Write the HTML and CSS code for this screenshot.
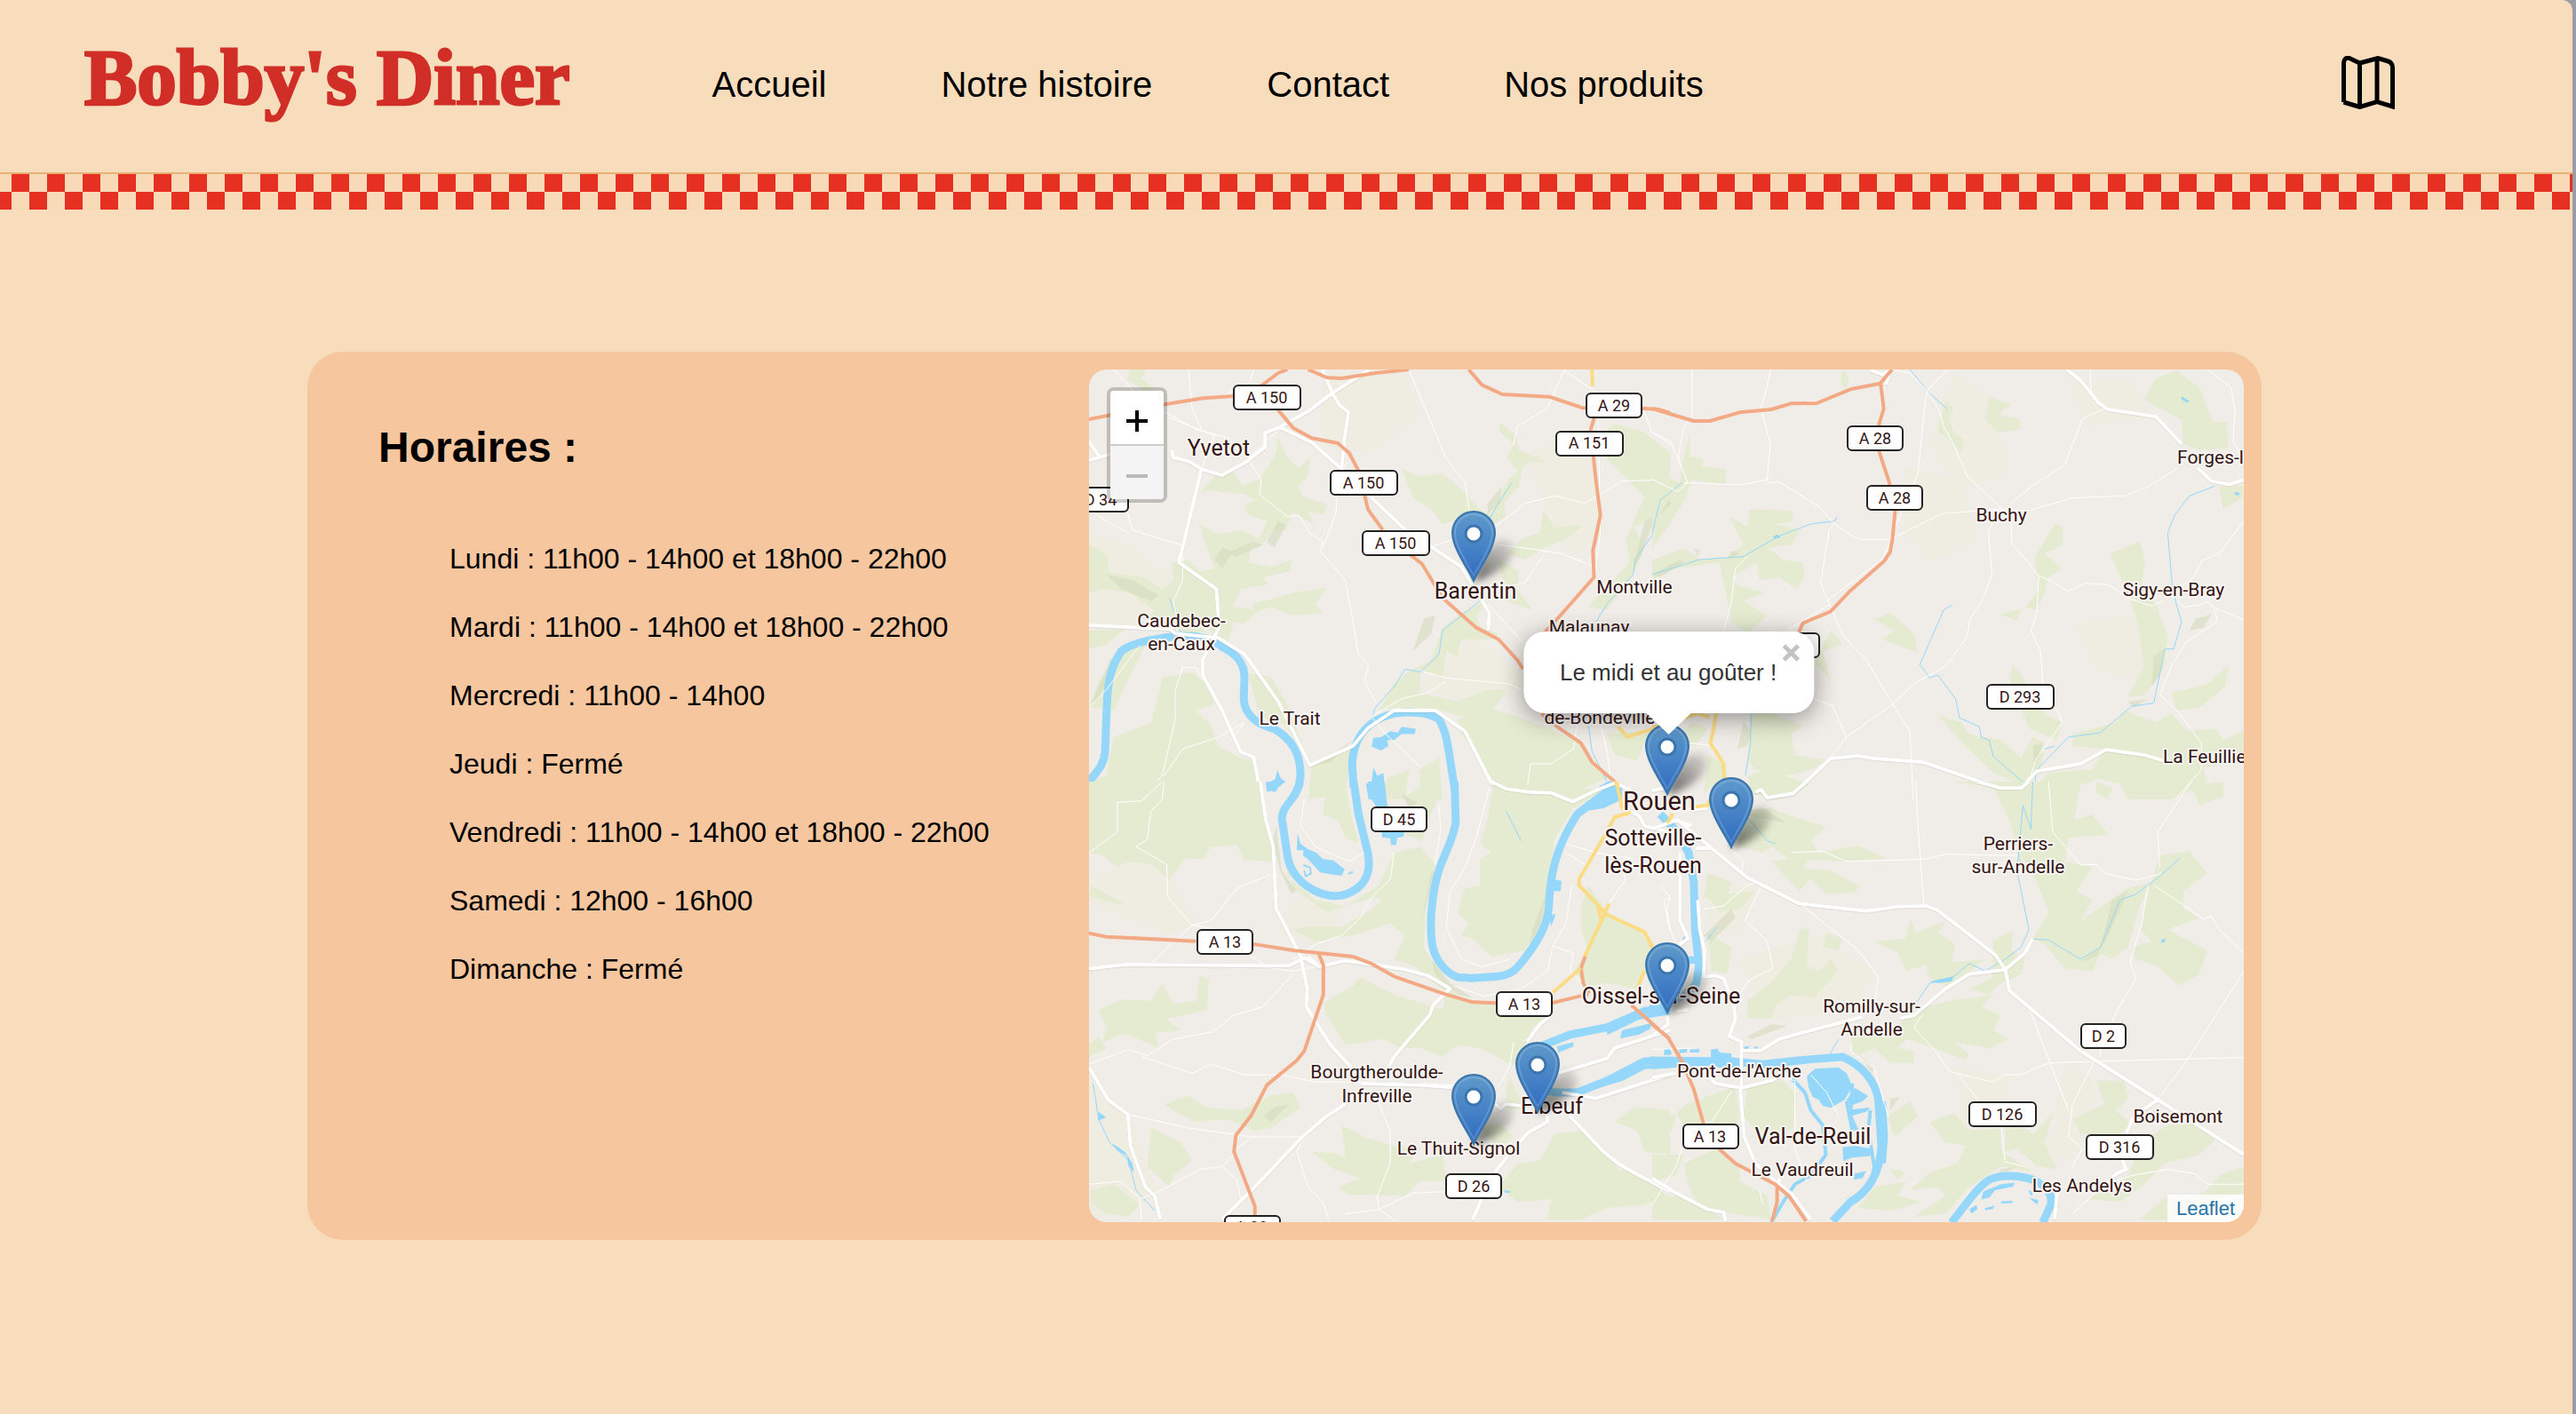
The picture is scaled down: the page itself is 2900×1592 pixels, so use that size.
FILE: index.html
```html
<!DOCTYPE html>
<html lang="fr">
<head>
<meta charset="utf-8">
<meta name="viewport" content="width=device-width, initial-scale=1">
<title>Bobby's Diner</title>
<link rel="stylesheet" href="styles.css">
</head>
<body>
<header class="header">
  <a class="logo" href="#">Bobby's Diner</a>
  <nav class="nav">
    <a href="#">Accueil</a>
    <a href="#">Notre histoire</a>
    <a href="#">Contact</a>
    <a href="#">Nos produits</a>
  </nav>
  <a class="map-link" href="#" aria-label="Carte">
    <svg viewBox="0 0 60 60" fill="none" stroke="#000" stroke-width="5">
      <path d="M2.500 52V8Q3 1 9 2.500L20.500 8 41 2.500 51 5.500Q57.500 7 57.500 13V57L40 51.500 20.500 57.500 2.500 52"/>
      <path d="M20.500 8V57M40 3V52"/>
    </svg>
  </a>
</header>
<div class="checker"></div>
<main class="main">
  <section class="card">
    <div class="hours">
      <h2>Horaires :</h2>
      <ul>
        <li>Lundi : 11h00 - 14h00 et 18h00 - 22h00</li>
        <li>Mardi : 11h00 - 14h00 et 18h00 - 22h00</li>
        <li>Mercredi : 11h00 - 14h00</li>
        <li>Jeudi : Fermé</li>
        <li>Vendredi : 11h00 - 14h00 et 18h00 - 22h00</li>
        <li>Samedi : 12h00 - 16h00</li>
        <li>Dimanche : Fermé</li>
      </ul>
    </div>
    <div class="map">
      <svg class="tiles" viewBox="0 0 1300 960" preserveAspectRatio="xMidYMid slice">
        <defs>
          <linearGradient id="pinFill" x1="0" y1="0" x2="0" y2="1"><stop offset="0" stop-color="#5f9acb"/><stop offset="1" stop-color="#2e6bc0"/></linearGradient>
          <filter id="soft" x="-50%" y="-50%" width="200%" height="200%"><feGaussianBlur stdDeviation="4"/></filter>
          <linearGradient id="shade" x1="0" y1="1" x2="1" y2="0"><stop offset="0" stop-opacity=".6"/><stop offset="1" stop-opacity=".06"/></linearGradient>
          <g id="pin">
            <path d="M0 0C4-22 18-46 36-48C52-46 46-22 24-10C14-4 6-1 0 0Z" fill="url(#shade)" filter="url(#soft)"/>
            <path d="M0-1C-6-14-24-38-24-55A24 24 0 0 1 24-55C24-38 6-14 0-1Z" fill="url(#pinFill)" stroke="#3a76ab" stroke-width="2"/>
            <path d="M0-7C-6-19-21-40-21-55A21 21 0 0 1 21-55C21-40 6-19 0-7Z" fill="none" stroke="#fff" stroke-opacity=".16" stroke-width="2"/>
            <circle cy="-54" r="9" fill="#fff" stroke="#3a75ae" stroke-width="3"/>
          </g>
        </defs>
        <rect width="1300" height="960" fill="#f0ede8"/>

        <!-- north-west sheet -->
        <g transform="translate(-6 -16) scale(.4209 .3333)">
          <g class="heath">
            <path d="M14 600L120 640 200 720 360 740 420 900 380 960 200 930 14 900ZM640 60L860 50 900 200 760 330 640 300ZM1180 330L1350 260 1400 600 1300 680ZM1050 950L1180 1100 1080 1200 900 1120Z"/>
          </g>
          <g class="wood">
            <path d="M125 48L168 48 152 80 192 112 164 120 116 82Z"/>
            <path d="M518 275L548 350 575 382 605 345 600 410 572 440 585 475 652 505 645 535 600 528 618 572 560 530 540 592 510 590 470 650 450 640 440 700 500 715 560 690 550 730 480 750 495 775 420 790 400 850 470 860 430 905 400 900 380 1000 330 920 290 960 220 930 170 890 190 860 120 800 60 790 14 800 14 690 60 680 70 735 160 750 210 790 240 760 235 700 280 690 310 730 350 720 320 620 310 570 360 605 420 590 470 620 490 560 440 540 430 505 460 490 430 470 330 455 310 465 350 410 400 395 425 440 470 420 515 330Z"/>
            <path d="M14 440L48 445 55 490 40 540 14 520ZM14 640L50 660 70 690 14 720ZM14 930L110 925 60 980 14 990Z"/>
            <path d="M570 800L650 785 620 840 640 870 560 880 500 850 460 870 450 840Z"/>
            <path d="M850 380L895 410 960 400 1000 440 1060 520 1090 540 1130 430 1175 370 1165 440 1125 500 1130 545 1070 590 1050 570 990 560 960 570 930 520 880 480ZM1115 230L1155 270 1165 320 1240 362 1190 360 1165 395 1130 345 1150 300 1110 255Z"/>
            <path d="M1230 525L1260 580 1335 575 1290 620 1230 650 1180 690 1130 670 1170 620 1220 600ZM1110 690L1165 730 1160 790 1200 860 1130 830Z"/>
            <path d="M1380 270L1420 230 1500 260 1568 330 1568 470 1530 500 1540 540 1470 580 1500 640 1470 740 1400 860 1350 850 1460 700 1450 620 1500 480 1440 400 1400 350Z"/>
            <path d="M960 920L1010 870 1080 830 1050 880 1060 920 1110 940 1090 960 1010 960 1000 1020 970 1000 960 1090 900 1060 900 1140 1000 1170 1080 1130 1130 1130 1100 1190 1040 1230 960 1200 900 1190 840 1190 790 1200 830 1110 880 1060 930 1030Z"/>
            <path d="M100 980L170 970 140 1040 80 1200 14 1190 40 1100 90 1030ZM210 1090L290 1070 330 1110 350 1180 300 1200 340 1250 360 1320 420 1360 455 1370 480 1500 14 1500 14 1440 60 1420 80 1290 180 1240Z"/>
            <path d="M440 1075L500 1085 540 1170 580 1300 610 1390 720 1320 700 1480 600 1500 610 1380 540 1250 470 1220Z"/>
            <path d="M1000 1230L1080 1190 1160 1220 1240 1260 1320 1300 1400 1430 1300 1480 1200 1470 1100 1450 1060 1360 1010 1280ZM900 1400L950 1360 960 1500 900 1500ZM810 1430L870 1400 860 1500 800 1500Z"/>
            <path d="M1400 1280L1568 1260 1568 1300 1500 1310 1480 1370 1420 1350Z"/>
          </g>
          <g class="relief">
            <path d="M520 560L540 575 510 650 490 630ZM450 630L480 640 410 680 380 670ZM60 740L130 760 200 810 180 830 100 790ZM350 690L370 650 400 660 370 720ZM20 1180L70 1030 110 980 80 1050 40 1160ZM910 890L940 880 930 940 880 1000ZM1500 560L1530 540 1490 680 1470 720ZM590 1390L660 1350 720 1300 660 1375ZM1080 500L1120 440 1110 500 1080 540Z"/>
          </g>
          <g class="stream"><path d="M1145 430L1090 540 1060 700M1060 830L960 930 950 1010 900 1070 860 1060 830 1120 780 1190 770 1230M1568 480L1530 540 1525 600 1475 690 1470 740 1400 840 1370 900M1350 1250L1360 1340 1400 1440M230 820L260 940"/></g>
          <g class="water-fill">
            <path d="M850 1255L888 1262 885 1280 850 1280 830 1300 812 1300 815 1320 795 1335 770 1322 775 1292 795 1290 820 1270 840 1275ZM775 1392L785 1420 802 1412 808 1500 762 1500 755 1448 770 1440ZM518 1402L528 1430 540 1442 522 1448 515 1475 490 1470 488 1448 512 1432Z"/>
            <path d="M1410 1435L1440 1460 1400 1500 1360 1500 1380 1455Z"/>
          </g>
          <g class="river">
            <path d="M14 1440C40 1400 55 1380 57 1340L62 1180C65 1090 75 1050 100 1000C130 970 180 960 250 948C300 945 340 955 370 985C410 1010 430 1040 430 1090L428 1160C430 1220 470 1250 510 1262C560 1300 580 1350 580 1420L575 1460"/>
            <path d="M722 1460L718 1380C722 1290 760 1230 830 1210C880 1200 930 1210 950 1230C975 1280 975 1340 992 1460"/>
          </g>
          <g class="lane">
            <path d="M80 48L140 130 200 180 300 250 390 280M280 48L290 180 315 250M455 48L445 90 370 140M870 48L910 170 970 350 1020 430 1040 600M1285 50L1240 180 1160 240 1150 300M1285 50L1375 130M1375 130L1382 600 1365 760M1480 130L1520 260 1568 300M530 240L440 350 475 420 470 470 545 545 575 540 605 600 640 630 632 660 700 760 720 900 735 1010 762 1050 750 1100 780 1170M705 360L680 420 675 530 640 650M110 500L130 590 180 610 260 640M1100 580L1180 500 1260 475 1340 500 1440 425 1568 420M920 650L1020 610M1110 640L1200 655 1280 670 1365 715M1230 675L1180 770 1130 780M1080 840L1175 970M910 1070L970 1090 1140 1110 1170 1130M970 1100L920 1140 850 1160 770 1220 800 1270 900 1390M14 1190L60 1130 150 980M320 1100L300 1055 265 1055 245 1130 245 1230 210 1420 150 1500M430 1240L360 1290 265 1330 215 1420M430 1240L395 1300M1320 1250L1310 1330 1250 1380 1195 1380 1185 1470M1380 1230L1400 1340 1410 1440M225 210L350 270 315 385M14 520L60 560 120 600M265 640L265 760 240 830 250 930"/>
          </g>
          <g class="road">
            <path d="M14 290L40 340 40 350M14 355L70 335M14 912L230 925 245 940 360 955 430 1010 520 1170 605 1385 720 1320 760 1260 830 1200 940 1200 1020 1270 1090 1445 1130 1465 1250 1475 1310 1500M235 320L240 345 285 360 315 385 370 405 435 360 485 310 485 262 525 243 600 190 665 128 765 48M638 48L665 128 685 170 708 192 697 290 690 385M525 243L610 295 690 385 860 590 1010 715 1075 850 1085 870 1082 930M315 385L255 700 355 790 362 920 318 1030 318 1080 370 1200 420 1340 455 1358 475 1500M1430 1450L1480 1480"/>
          </g>
          <g class="motorway">
            <path d="M14 216L220 165 320 145 400 138 475 103 520 60 545 48M600 48L650 75 690 78 780 60 870 48M520 185L560 245 610 280 680 297 710 330 735 390M751 470L760 520 800 590M870 670L905 705 960 820 1050 920 1110 960 1160 1030 1175 1060M1225 1210L1270 1258 1330 1310 1360 1375 1420 1440M1030 48L1065 100 1120 132 1245 140 1335 178 1500 180 1535 182 1568 195M1367 205L1356 250 1368 400 1382 540 1362 660 1365 750 1260 900 1230 940"/>
          </g>
          <g class="trunk"><path d="M1360 48L1361 105M1430 1255L1455 1290 1500 1270 1568 1250M1420 1440L1435 1500"/></g>
        </g>

        <!-- south-west sheet -->
        <g transform="translate(-6 464) scale(.4209 .3333)">
          <g class="heath">
            <path d="M30 330L120 270 220 300 300 480 220 520 14 400ZM14 1000L60 1080 120 1130 200 1400 14 1480ZM560 400L700 420 640 560 520 500Z"/>
          </g>
          <g class="wood">
            <path d="M14 0L470 0 505 220 510 270 430 265 410 215 340 220 320 262 270 260 230 330 180 280 120 270 90 290 50 250 14 240ZM20 350L60 380 110 410 90 415 14 385Z"/>
            <path d="M650 10L700 20 720 130 735 210 700 190 680 130 640 110ZM920 0L945 60 920 140 905 200 860 180 880 90 860 50Z"/>
            <path d="M520 130L545 320 620 400 700 420 790 350 830 240 900 220 940 280 915 400 910 560 970 680 1010 740 1090 745 1190 790 1250 790 1200 830 1180 900 1150 960 1060 900 1000 890 960 930 900 900 850 900 800 870 700 890 650 790 640 750 720 690 740 660 830 720 960 770 970 710 880 620 830 600 860 520 820 480 720 520 620 540 560 500 600 490 690 490 760 440 800 400 780 390 650 440 560 360Z"/>
            <path d="M1095 10L1240 10 1390 30 1310 90 1260 190 1240 370 1230 460 1180 570 1090 590 1040 530 1010 520 1030 480 1000 440 1020 360 1060 350 1060 260 1090 240 1060 210 1080 130Z"/>
            <path d="M1350 350L1400 440 1500 510 1530 560 1480 700 1400 680 1350 690 1310 640 1350 570 1330 500 1330 420Z"/>
            <path d="M40 770L110 735 180 740 210 680 240 750 300 740 310 655 335 665 330 770 270 790 220 800 260 840 190 850 200 900 110 850 50 880 60 830ZM14 890L40 860 60 900 14 930Z"/>
            <path d="M215 1090L280 1060 330 1100 420 1110 500 1060 560 1050 580 1100 500 1170 460 1180 380 1140 300 1150 250 1120ZM180 1170L260 1220 290 1280 240 1330 230 1370 170 1300Z"/>
            <path d="M610 1250L670 1255 700 1270 690 1160 750 1200 830 1230 900 1240 870 1290 960 1260 970 1350 900 1350 860 1400 710 1395 680 1370 740 1340 670 1310 650 1290Z"/>
            <path d="M1260 1190L1330 1180 1390 1240 1430 1310 1500 1330 1560 1400 1500 1430 1400 1440 1330 1480 1240 1480 1250 1410 1160 1420 1110 1370 1160 1290 1220 1280ZM1420 1150L1470 1100 1568 1110 1568 1260 1500 1250 1480 1180ZM20 1380L80 1360 150 1430 120 1470 60 1460 20 1420ZM1140 1000L1180 1100 1130 1110 1130 1030ZM1060 1170L1110 1150 1150 1200 1110 1240Z"/>
          </g>
          <g class="relief">
            <path d="M515 150L530 300 570 370 555 380 525 300 505 200ZM930 300L945 320 920 400 905 460ZM930 600L980 680 1040 730 1000 720 940 650ZM1240 870L1350 830 1300 845 1230 890ZM850 40L890 70 870 90ZM480 1130L510 1100 550 1090 500 1150ZM1240 370L1220 490 1190 570 1200 500Z"/>
          </g>
          <g class="stream"><path d="M25 1020L40 1140 70 1220 120 1280 140 1380 190 1450M1130 100L1170 200"/></g>
          <g class="water-fill">
            <path d="M760 0L805 0 812 80 858 170 855 186 838 190 836 214 822 214 820 192 798 188 795 110 770 60ZM488 0L540 0 520 20 490 35ZM572 175L580 210 600 228 622 240 640 262 668 266 698 296 690 318 655 312 632 306 600 262 586 250 588 232 570 232Z"/>
            <path d="M1258 330L1278 335 1276 370 1255 370ZM1245 450L1263 448 1250 490ZM1400 10L1440 20 1440 60 1390 90 1340 100ZM1440 840L1520 815 1515 835 1485 855 1470 858 1435 868ZM1265 895L1310 880 1310 895 1270 915ZM1145 635L1160 630 1155 645ZM1125 1380L1142 1384 1138 1390 1125 1387ZM40 1115L60 1135 38 1145ZM75 1220L110 1250 130 1290 135 1320 120 1300 115 1265 90 1245ZM1552 920L1568 905 1568 925Z"/>
          </g>
          <g class="outline-water"><path d="M588 282L605 290 608 310 594 320 590 300M708 312L720 304"/></g>
          <g class="river">
            <path d="M578 0C570 60 530 80 530 125L545 250C550 300 580 350 630 375C670 395 710 390 745 345C765 310 765 280 760 240L735 110 722 0"/>
            <path d="M992 0L995 140C985 210 960 250 945 320C930 400 925 480 932 550C940 610 975 650 1000 661L1040 664 1110 658C1150 650 1160 630 1190 580C1230 510 1245 460 1245 400C1250 300 1265 220 1320 110C1350 80 1380 50 1420 20"/>
            <path d="M1568 765L1500 775 1400 830 1300 855 1230 890 1190 960 1200 1030 1260 1050 1320 1050 1400 1010 1500 945 1575 943"/>
          </g>
          <g class="channel"><path d="M1400 850L1480 800 1568 780M1320 1050L1440 1005 1500 965 1568 960"/></g>
          <g class="lane">
            <path d="M14 240L90 170 90 70 155 65 210 0M215 0L210 60 180 100 170 195 140 220 175 245 222 280 225 390 290 485 340 470 410 360 500 315M290 485L180 615M290 485L360 500M435 580L500 630 560 640 700 605M0 960L120 905 170 925 240 870 345 845 400 790 480 760 560 650M155 930L290 985 340 955 430 990 530 990 620 1015 780 1015M120 1125L280 1170 450 1200 580 1200M450 1200L400 1250M14 1360L100 1350 150 1410 200 1385 310 1310 370 1300 400 1260M370 1300L410 1345 420 1410M150 1410L155 1480M590 1200L570 1250 600 1370 640 1420 655 1480M790 1090L820 1180 820 1290 785 1400 790 1445 700 1460M790 1445L880 1390 970 1385M790 1445L830 1480M590 60L580 150 620 220 710 270 750 240M950 80L955 160 940 280M1085 20L1050 190 1020 290 980 370 970 490 1010 600 1065 625 1140 600M1290 210L1370 240 1470 260M1290 240L1340 280M1430 260L1450 330 1400 420M1305 350L1290 480 1255 555 1310 580 1300 640 1350 700M1255 555L1240 640 1170 700 1070 725 990 690M830 240L820 330 770 390 740 460 690 520 620 550 560 600M1568 390L1560 430 1568 500M1150 880L1140 960 1110 1030M1090 1030L900 1020"/>
          </g>
          <g class="road">
            <path d="M472 0L487 130 507 220 515 430 580 590 598 700 595 760 660 890 740 1000M14 632L110 618 485 622 550 622 590 595 630 625 700 605 850 632 920 655 980 700 935 755 925 790 830 930 810 980M600 590L630 625M740 1020L900 1025 985 1033M700 1090L650 1130 585 1200 540 1260 450 1380 385 1460 370 1480M14 965L65 1075 118 1125 125 1230 165 1370 190 1400 205 1480M1090 0L1130 25 1190 35 1250 38 1308 68 1370 30 1420 5M1100 1090L1115 1105 1130 1090 1170 1095M1240 1120L1240 1150 1190 1185 1150 1240 1100 1320M1065 1405L1055 1440 1040 1480M1255 770L1245 795 1220 820 1185 880M1270 985L1400 935 1420 900 1470 880 1568 840M1280 1050L1370 1070 1568 990M1300 1130L1390 1250 1430 1290 1470 1320 1568 1385M1460 100L1485 115 1500 150 1568 170M1500 60L1530 50"/>
          </g>
          <g class="motorway">
            <path d="M14 512L60 524 300 539M450 548L560 570 720 591 770 615 830 658 960 715 1040 745 1105 748M1252 748L1350 718M1342 588L1330 630 1336 680 1352 715M1465 755L1568 870M628 580L641 620 641 720 590 910 570 942 490 1025 448 1128 407 1195 402 1250 458 1435 458 1465"/>
          </g>
          <g class="trunk"><path d="M1425 0L1440 90 1460 105 1420 120 1390 190 1325 330 1325 350 1400 450 1500 508 1522 560M1405 412L1385 470 1340 590M1375 420L1385 470M1500 640L1480 700M1330 630L1255 712"/></g>
        </g>

        <!-- north-east sheet -->
        <g transform="translate(634 -16) scale(.4464 .3333)">
          <g class="heath">
            <path d="M760 60L860 140 900 400 780 450 700 300ZM1050 100L1200 80 1260 200 1100 240ZM1060 900L1250 880 1240 1100 1120 1060ZM640 380L780 420 820 620 700 700 640 600Z"/>
          </g>
          <g class="wood">
            <path d="M1320 50L1382 110 1400 180 1415 225 1450 225 1452 315 1380 320 1340 300 1335 220 1240 150 1270 80ZM850 140L905 165 875 200 925 215 930 250 870 262 840 215ZM480 50L495 70 490 120 475 90ZM740 155L760 180 748 220 765 270 785 285 780 330 745 280 720 255Z"/>
            <path d="M0 370L30 360 40 410 70 430 75 370 95 265 95 340 130 350 125 375 185 385 185 435 140 430 100 420 85 480 40 580 0 650ZM195 545L240 580 245 520 350 525 355 560 310 570 375 590 350 640 290 650 330 690 380 700 385 750 365 790 320 750 270 760 265 700 200 750 220 780 285 800 230 830 290 880 240 940 200 900 170 700 60 720 0 760 0 690 80 650 120 690 190 680 230 640Z"/>
            <path d="M1015 570L1035 580 1035 640 990 670 1035 720 1000 750 985 820 965 860 935 850 920 895 875 875 940 855 975 790 965 680ZM1230 628L1242 700 1235 770 1270 840 1300 950 1290 1060 1240 1150 1200 1155 1240 1050 1225 900 1200 810 1155 670Z"/>
            <path d="M600 870L630 905 660 940 670 1005 580 960 610 930 560 890ZM450 930L480 975 430 1000 450 1100 410 1040ZM910 1040L940 1100 965 1180 1000 1220 1035 1240 1020 1300 950 1260 900 1090ZM1455 1045L1445 1120 1380 1190 1320 1200 1310 1140 1400 1110Z"/>
            <path d="M720 1215L780 1240 800 1280 880 1300 930 1360 960 1290 990 1310 980 1400 930 1450 860 1410 790 1320ZM1060 1280L1170 1240 1190 1200 1270 1240 1310 1210 1350 1270 1420 1260 1440 1300 1492 1270 1492 1380 1390 1390 1400 1450 1310 1500 1200 1500 1180 1450 1130 1430 1060 1460 1060 1500 980 1500 960 1470 1000 1410 1110 1400 1140 1330 1060 1320ZM250 1220L270 1160 320 1220 380 1250 350 1280 360 1350 440 1370 400 1400 340 1420 260 1400 240 1360ZM100 1240L140 1260 110 1320 60 1300Z"/>
            <path d="M240 1420L290 1400 400 1450 320 1500 250 1480ZM140 1350L190 1380 180 1430 130 1480ZM1430 445L1492 440 1490 480 1440 520Z"/>
          </g>
          <g class="relief">
            <path d="M0 740L70 690 80 700 20 750ZM105 650L120 660 115 680ZM1370 890L1410 875 1390 920 1355 930ZM1290 990L1280 1080 1260 1120 1265 1020ZM960 1320L985 1310 965 1400ZM230 1240L250 1270 240 1320 215 1330ZM1200 1170L1250 1160 1215 1190ZM40 490L50 500 20 540ZM200 660L220 670 190 690Z"/>
          </g>
          <g class="stream"><path d="M650 48L700 130 745 182M75 430L20 490 0 600M0 740L120 690 230 680 320 610 400 570 460 560 467 545M1418 442L1355 475 1318 540 1300 600 1313 800 1335 900 1315 992 1293 992 1265 1175 1210 1185 1130 1275 1050 1290 970 1400 960 1500M758 843L735 860 675 1045 700 1090 720 1080 765 1160 775 1225 825 1255 830 1290 850 1300 860 1355 960 1470M250 1150L248 1310 235 1420M1015 1320L990 1330"/></g>
          <g class="water-fill"><path d="M1335 138L1355 155 1350 160 1335 150ZM305 612L315 605 325 615 308 620ZM1470 462L1482 464 1478 474 1468 470Z"/></g>
          <g class="lane">
            <path d="M745 48L693 120 685 200 670 400 600 620M600 48L650 60 693 120 725 190 735 240 760 300 795 410 860 490 890 530M300 48L275 180 298 300 290 420 220 438 80 430M100 48L100 210 80 240 65 350 90 430 65 460 0 420M290 430L320 427 425 515 455 565 510 615 530 622 600 622 730 535 870 520 950 525 1060 482 1190 475 1250 445 1325 380M905 500L960 440 1040 370 1085 215 1140 180M860 560L848 600 857 740 835 820 800 895 795 950 740 1050 660 1110 605 1180 490 1290 450 1360M905 560L907 635 975 745 970 870 955 930 980 1000 985 1110M975 745L1010 765 1050 798 1090 770 1150 775 1200 820 1260 848 1290 830M1105 48L1107 125M1400 48L1460 110 1470 190 1465 290 1490 350M1492 560L1430 670 1390 690 1365 750M1325 830L1340 850 1380 845 1400 830 1420 860 1425 900 1345 970 1310 1050 1280 1145 1330 1210 1385 1310 1385 1400 1320 1500M1420 855L1492 893M445 600L425 770 480 945 540 1030 600 1165 650 1270 658 1500M450 840L340 930M440 830L580 690 600 630M0 260L45 290 70 360M240 680L210 720 200 830 180 930M460 570L445 590 445 620M410 1160L455 1185 490 1290M95 1310L160 1320M1020 1195L1035 1240 970 1360 950 1440M1365 750L1325 790"/>
          </g>
          <g class="road"><path d="M550 50L580 65 600 52 590 100M1045 48L1080 85 1125 160 1150 183 1270 207 1335 300M1375 380L1410 425 1455 437 1492 420M260 1475L275 1468 290 1495 355 1482 450 1362 520 1353 560 1362 685 1375 880 1465 930 1462 970 1405 1080 1380 1145 1332 1240 1350 1290 1370M0 1470L40 1460"/></g>
          <g class="motorway"><path d="M0 180L105 222 145 222 220 193 300 183 350 163 415 162 500 115 575 95 605 48M576 95L584 180 571 238M571 320L600 438M613 520L606 620 600 665 585 695 500 795 450 865 380 905 370 935"/></g>
          <g class="trunk"><path d="M80 1225L115 1210 145 1222M162 1200L155 1260 147 1310 178 1375 183 1430M0 1255L30 1250"/></g>
        </g>

        <!-- south-east sheet -->
        <g transform="translate(634 464) scale(.4464 .3333)">
          <g class="heath">
            <path d="M220 600L420 520 560 640 500 780 300 800ZM760 960L900 1000 860 1200 780 1180ZM1040 950L1120 1000 1080 1240 1000 1300ZM140 330L260 360 220 520 140 480Z"/>
          </g>
          <g class="wood">
            <path d="M750 0L1080 0 1065 130 1110 110 1150 180 1050 190 1040 270 1110 290 1070 370 1110 400 1080 470 1200 360 1260 340 1230 420 1200 560 1160 600 1130 580 1110 640 1040 630 990 550 960 530 1000 440 960 310 930 250 900 130 860 20ZM1120 0L1160 20 1150 60 1120 40Z"/>
            <path d="M1280 250L1355 235 1400 310 1340 370 1340 430 1380 460 1300 500 1400 570 1380 650 1330 690 1270 620 1220 600 1210 560 1260 540 1230 500 1250 380ZM1360 20L1440 0 1440 50 1380 80Z"/>
            <path d="M200 100L300 90 380 130 440 150 400 200 420 240 520 215 590 260 480 270 340 260 300 220 280 240 220 220ZM300 270L400 250 380 290 450 300 525 355 510 375 440 380 400 330 370 370 330 310Z"/>
            <path d="M140 310L200 340 190 380 260 370 220 430 170 440 150 400 130 390ZM140 510L200 560 190 650 150 640Z"/>
            <path d="M375 495L395 500 390 620 420 640 450 600 470 640 410 730 350 720 310 760 300 800 240 800 240 740 300 680 350 600ZM440 510L480 530 470 570 430 560Z"/>
            <path d="M650 460L665 510 740 470 720 510 765 550 755 610 840 600 780 660 750 700 700 660 690 620 640 640 620 580 560 540 640 530ZM860 540L910 500 905 570 940 600 930 650 870 690 850 720 800 700 860 660Z"/>
            <path d="M750 740L860 720 830 760 880 790 860 840 900 870 850 900 760 880 800 920 790 940 690 890 640 870 620 900 660 910 660 950 600 950 560 900 510 930 500 860 610 840 660 770Z"/>
            <path d="M240 1030L330 1010 365 1060 355 1170 300 1200 260 1180 230 1130ZM85 1090L210 1030 220 1130 215 1160 80 1160 60 1120ZM80 1290L160 1240 220 1290 220 1350 290 1400 300 1480 120 1440 90 1360Z"/>
            <path d="M0 1100L60 1130 50 1180 0 1160ZM0 1260L80 1260 60 1330 0 1350ZM0 1400L60 1400 140 1440 180 1480 0 1480Z"/>
            <path d="M595 1130L650 1080 670 1130 610 1200ZM560 1370L640 1350 620 1400 680 1420 600 1450 520 1440ZM600 1310L640 1320 620 1345Z"/>
            <path d="M700 1150L760 1120 800 1180 880 1170 880 1250 930 1290 960 1320 880 1300 800 1370 740 1460 660 1470 740 1400 720 1370 650 1380 700 1320 770 1290 790 1230 740 1220ZM890 1170L930 1160 960 1190 1010 1120 990 1220 1020 1310 970 1300 920 1240 890 1250Z"/>
            <path d="M1120 1010L1190 1010 1200 1070 1170 1110 1210 1160 1180 1190 1080 1190 1060 1140 1140 1090ZM1230 1220L1300 1160 1380 1150 1420 1210 1380 1260 1290 1290 1240 1360 1180 1420 1100 1410 1200 1330ZM1430 1330L1492 1300 1492 1390 1420 1410 1300 1480 1230 1480 1300 1400 1340 1420 1400 1380Z"/>
          </g>
          <g class="relief"><path d="M1160 400L1200 370 1180 430 1150 520 1120 590 1080 610 1130 560ZM240 860L300 820 340 825 250 870ZM130 520L200 430 210 460 150 540ZM920 200L935 300 925 280ZM600 1070L625 1065 600 1110ZM880 1310L920 1300 850 1350ZM200 100L280 90 340 140 260 120ZM520 920L560 970 555 985Z"/></g>
          <g class="stream"><path d="M960 0L955 160 935 80 920 300 950 500 930 560 890 600 840 640 800 615 750 670 700 680 660 760M960 532L1000 535 1080 600 1130 560 1180 400 1220 380 1280 320 1330 260M240 120L290 200 310 210M470 870L448 920M135 540L165 490"/></g>
          <g class="water-fill">
            <path d="M390 995L410 970 470 965 490 985 505 1030 485 1075 450 1102 430 1095 420 1075 405 1065 395 1035ZM512 1035L545 1062 530 1080 500 1095 490 1075ZM480 1235L510 1230 550 1240 550 1265 505 1270 482 1282ZM490 1110L550 1100 540 1115 500 1130ZM700 675L760 658 755 675 720 680ZM510 1325L540 1315 530 1340 508 1345ZM30 905L45 900 50 920 30 925ZM68 905L88 902 88 914 68 918ZM95 905L120 903 118 915 95 915ZM148 905L165 902 170 915 200 918 200 940 148 940ZM232 895L245 893 242 903 232 903ZM255 893L268 897 262 905ZM82 590L110 590 108 615 90 615ZM75 530L90 515 82 540ZM1285 533L1295 530 1292 542 1283 544Z"/>
            <path d="M835 1385L880 1360 915 1355 910 1368 865 1380 850 1405 830 1412ZM880 1418L910 1416 908 1424 880 1425ZM840 1440L865 1432 858 1445 838 1448ZM800 1445L818 1430 820 1445 805 1460ZM948 1378L962 1390 955 1400ZM950 1405L975 1415 970 1428Z"/>
          </g>
          <g class="river">
            <path d="M20 110L60 165 92 240 105 340 108 500 118 620 112 680C90 720 50 750-5 768"/>
            <path d="M-5 942L200 945 280 955 400 938 480 930C530 960 560 1010 570 1070L578 1230C575 1330 540 1390 500 1420L455 1485"/>
            <path d="M755 1490C790 1430 820 1370 850 1345C880 1325 930 1330 960 1345C1000 1370 1010 1400 1005 1430L985 1490"/>
          </g>
          <g class="channel"><path d="M0 965L120 955 220 965M350 1000L385 1050 400 1110 430 1160 438 1260 400 1330 360 1360 330 1420 300 1490M505 1020L500 1130 520 1190M550 1110L545 1180 560 1300 550 1370M585 1080L590 1200 585 1290M490 1080L505 1180"/></g>
          <g class="lane">
            <path d="M665 0L668 100 680 330 685 415M195 225L230 270 225 310M275 350L235 470 290 540 305 630 245 670 225 710M375 415L520 570 570 660 560 780M350 240L430 235 490 270 690 262 740 245 920 250M1000 0L1010 170 1080 280 1120 280 1140 310 1220 333 1285 310M1360 0L1275 170 1280 290M1265 350L1310 390 1390 465 1410 455 1430 500 1492 580M1250 350L1235 480 1205 610 1220 665 1170 780 1130 900 1130 930M1492 640L1350 940 1275 1075M1492 932L1120 945 1000 950 930 990 890 990 860 1015 750 980 720 920 660 830 680 790M1115 945L1060 1090 1050 1200 1085 1240 1060 1300M950 760L980 870 1050 1110M770 985L830 1090M880 1165L890 1285 940 1300M200 1045L150 1150 130 1150M75 1240L60 1300 0 1430M20 350L45 390 30 400 40 480 60 550M130 430L180 420 240 350 270 340M100 900L0 905M390 1350L360 1240 360 1010 330 1000M470 1130L440 1050 400 990M1060 1460L1100 1410 1130 1370 1210 1330 1300 1310 1370 1325 1400 1360 1492 1360M500 890L500 910 560 970 580 1060 595 1130M280 1430L270 1380"/>
          </g>
          <g class="road">
            <path d="M820 0L880 22 930 22 950 0M260 35L275 28 290 55 355 40 390 0M90 95L140 90M60 125L145 220 240 325 370 412 540 437 620 422 690 420 720 435 865 585 890 635 800 650 740 700 660 790 625 800M890 630L900 705 1080 910 1275 1075 1492 1260M890 635L940 580 960 530M70 240L70 470 90 530 60 560M110 225L145 225M115 400L120 500 132 570 130 660 160 655 180 665 205 750 210 800 195 860 225 880 225 1035 160 1020 130 980M225 908L275 908 320 870 360 855 530 795M222 1035L232 1200 260 1290 310 1350 350 1390 400 1480M0 860L40 820 38 790M0 1000L60 985M225 1035L300 1010 330 990M1275 1075L1215 1130 1195 1190M1185 1275L1195 1310 1170 1325 1130 1380M1015 1480L1020 1400 1030 1370M0 1340L60 1390 140 1445 180 1455 185 1485M100 150L60 130 0 160M320 1340L320 1370M90 770L60 775"/>
          </g>
          <g class="motorway"><path d="M0 820L40 865 75 945 105 1040 130 1158M168 1240L210 1290 310 1360 345 1400 388 1485M315 1365L315 1420 302 1485"/></g>
          <g class="trunk"><path d="M110 85L140 80 145 60M52 108L38 140M0 545L-5 560"/></g>
        </g>

        <!-- road numbers -->
        <g class="badge">
          <rect x="163" y="18" width="75" height="27" rx="5"/><text x="200" y="38">A 150</text>
          <rect x="272" y="114" width="75" height="27" rx="5"/><text x="309" y="134">A 150</text>
          <rect x="308" y="182" width="75" height="27" rx="5"/><text x="345" y="202">A 150</text>
          <rect x="560" y="27" width="62" height="27" rx="5"/><text x="591" y="47">A 29</text>
          <rect x="526" y="70" width="75" height="27" rx="5"/><text x="563" y="89">A 151</text>
          <rect x="854" y="64" width="62" height="27" rx="5"/><text x="885" y="84">A 28</text>
          <rect x="876" y="131" width="62" height="27" rx="5"/><text x="907" y="151">A 28</text>
          <rect x="-18" y="133" width="62" height="27" rx="5"/><text x="13" y="153">D 34</text>
          <rect x="760" y="297" width="62" height="27" rx="5"/>
          <rect x="1011" y="355" width="75" height="27" rx="5"/><text x="1048" y="375">D 293</text>
          <rect x="318" y="493" width="62" height="27" rx="5"/><text x="349" y="513">D 45</text>
          <rect x="122" y="631" width="62" height="27" rx="5"/><text x="153" y="651">A 13</text>
          <rect x="459" y="701" width="62" height="27" rx="5"/><text x="490" y="721">A 13</text>
          <rect x="402" y="906" width="62" height="27" rx="5"/><text x="433" y="926">D 26</text>
          <rect x="153" y="953" width="62" height="27" rx="5"/><text x="183" y="972">A 28</text>
          <rect x="1117" y="737" width="50" height="27" rx="5"/><text x="1142" y="757">D 2</text>
          <rect x="991" y="825" width="75" height="27" rx="5"/><text x="1028" y="845">D 126</text>
          <rect x="1123" y="862" width="75" height="27" rx="5"/><text x="1160" y="882">D 316</text>
          <rect x="669" y="850" width="62" height="27" rx="5"/><text x="699" y="870">A 13</text>
        </g>

        <!-- place names -->
        <g class="village">
          <text x="104" y="290">Caudebec-<tspan x="104" y="316">en-Caux</tspan></text>
          <text x="226" y="400">Le Trait</text>
          <text x="614" y="252">Montville</text>
          <text x="563" y="297">Malaunay</text>
          <text x="575" y="399">de-Bondeville</text>
          <text x="324" y="798">Bourgtheroulde-<tspan x="324" y="825">Infreville</tspan></text>
          <text x="416" y="884">Le Thuit-Signol</text>
          <text x="1225" y="106" class="from-left">Forges-l</text>
          <text x="1027" y="171">Buchy</text>
          <text x="1221" y="255">Sigy-en-Bray</text>
          <text x="1209" y="443" class="from-left">La Feuillie</text>
          <text x="1046" y="541">Perriers-<tspan x="1046" y="567">sur-Andelle</tspan></text>
          <text x="881" y="724">Romilly-sur-<tspan x="881" y="750">Andelle</tspan></text>
          <text x="732" y="797">Pont-de-l'Arche</text>
          <text x="803" y="908">Le Vaudreuil</text>
          <text x="1226" y="848">Boisemont</text>
          <text x="1118" y="926">Les Andelys</text>
        </g>
        <g class="town">
          <text x="146" y="97">Yvetot</text>
          <text x="435" y="258">Barentin</text>
          <text x="635" y="536">Sotteville-<tspan x="635" y="567">lès-Rouen</tspan></text>
          <text x="644" y="714">Oissel-sur-Seine</text>
          <text x="521" y="838">Elbeuf</text>
          <text x="815" y="872">Val-de-Reuil</text>
        </g>
        <text class="city" x="642" y="496">Rouen</text>

        <use href="#pin" x="433" y="239"/>
        <use href="#pin" x="651" y="479"/>
        <use href="#pin" x="723" y="539"/>
        <use href="#pin" x="651" y="725"/>
        <use href="#pin" x="505" y="837"/>
        <use href="#pin" x="433" y="873"/>
      </svg>
      <div class="zoom">
        <button type="button" aria-label="Zoom avant"><svg viewBox="0 0 26 26"><path d="M1 13H25M13 1V25" stroke="#000" stroke-width="4"/></svg></button>
        <button type="button" aria-label="Zoom arrière" disabled><svg viewBox="0 0 26 26"><path d="M1 13H25" stroke="#bbb" stroke-width="4"/></svg></button>
      </div>
      <div class="popup">
        <p>Le midi et au goûter !</p>
        <button type="button" aria-label="Fermer"><svg viewBox="0 0 20 20"><path d="M2 2L18 18M18 2L2 18" stroke="#c3c3c3" stroke-width="5"/></svg></button>
      </div>
      <a class="attribution" href="#">Leaflet</a>
    </div>
  </section>
</main>
</body>
</html>
```
FILE: styles.css
```css
* { box-sizing: border-box; }

html { background: #9b9da6; }

body {
  margin: 0 4px 0 0;
  min-height: 100vh;
  background: #f8ddbd;
  border-top-right-radius: 12px;
  font-family: "Liberation Sans", Arial, sans-serif;
  color: #000;
}

a { color: inherit; text-decoration: none; }

.header {
  display: flex;
  align-items: center;
  height: 196px;
  padding: 0 200px 8px 95px;
  border-bottom: 2px solid #e8b173;
}

.logo {
  margin: 0 160px 12px 0;
  font-family: "Liberation Serif", "Times New Roman", serif;
  font-size: 89px;
  font-weight: bold;
  line-height: 100px;
  color: #d02e27;
  -webkit-text-stroke: 3px #d02e27;
  white-space: nowrap;
}

.nav {
  display: flex;
  gap: 129px;
  padding-top: 4px;
  font-size: 40px;
  line-height: 46px;
  white-space: nowrap;
}

.map-link { margin-left: auto; }
.map-link svg { display: block; width: 60px; height: 60px; }

.checker {
  height: 40px;
  background-color: #f9dab8;
  background-image:
    linear-gradient(90deg, #e63022 50%, #f9dab8 50%),
    linear-gradient(90deg, #e63022 50%, #f9dab8 50%);
  background-size: 40px 20px;
  background-position: 13px 0, 33px 20px;
  background-repeat: repeat-x;
}

.main { padding: 160px 24px 160px 20px; }

.card {
  display: grid;
  grid-template-columns: minmax(0, 43fr) minmax(0, 65fr);
  max-width: 2200px;
  margin: 0 auto;
  padding: 20px;
  border-radius: 40px;
  background: #f6c69f;
}

.hours { padding: 60px; }

.hours h2 {
  margin: 0 0 80px;
  font-size: 48px;
  line-height: 55px;
}

.hours ul {
  display: flex;
  flex-direction: column;
  gap: 40px;
  margin: 0;
  padding: 0 0 0 80px;
  list-style: none;
  font-size: 32px;
  line-height: 37px;
  white-space: nowrap;
}

.map {
  position: relative;
  aspect-ratio: 65 / 48;
  border-radius: 20px;
  overflow: hidden;
}

.tiles { display: block; width: 100%; height: 100%; }

.tiles path { vector-effect: non-scaling-stroke; }
.heath { fill: #efece1; }
.wood { fill: #e5ebd0; }
.relief { fill: #d3dabd; opacity: .6; }
.water-fill { fill: #94d7fb; }
.river, .stream, .channel, .outline-water { fill: none; stroke: #94d7fb; stroke-linejoin: round; }
.river { stroke-width: 9px; }
.channel { stroke-width: 4px; }
.outline-water { stroke-width: 2px; }
.stream { stroke-width: 1px; }
.lane, .road { fill: none; stroke: #fff; stroke-linejoin: round; }
.lane { stroke-width: 1px; }
.road { stroke-width: 4px; filter: drop-shadow(0 1px 1px rgba(90, 80, 60, .3)); }
.motorway, .trunk { fill: none; stroke: #f4a985; stroke-width: 4px; stroke-linejoin: round; }
.trunk { stroke: #fbdb84; }

.tiles text {
  font-family: Roboto, "Noto Sans", sans-serif;
  text-anchor: middle;
  fill: #331414;
}

.badge rect { fill: #fff; stroke: #222; stroke-width: 2px; }
.badge text { font-size: 18px; }

.village text, .town text, .city {
  paint-order: stroke;
  stroke: #f8f5f2;
  stroke-width: 4px;
  stroke-linejoin: round;
}

.village text { font-size: 21px; }
.village .from-left { text-anchor: start; }
.town text { font-size: 25px; }
.tiles .city { font-size: 29px; }

.zoom {
  position: absolute;
  top: 20px;
  left: 20px;
  border: 4px solid rgba(0, 0, 0, .2);
  border-radius: 8px;
  background-clip: padding-box;
}

.zoom button {
  display: grid;
  place-items: center;
  width: 60px;
  height: 60px;
  padding: 8px 0 0;
  border: 0;
  border-radius: 4px 4px 0 0;
  background: #fff;
}

.zoom button + button {
  height: 62px;
  border-top: 2px solid #ccc;
  border-radius: 0 0 4px 4px;
  background: #f4f4f4;
}

.zoom svg { width: 26px; height: 26px; }

.popup {
  position: absolute;
  left: 50.2%;
  bottom: 59.7%;
  transform: translateX(-50%);
  padding: 26px 42px 26px 41px;
  border-radius: 24px;
  background: #fff;
  box-shadow: 0 6px 28px rgba(0, 0, 0, .4);
}

.popup::after {
  content: "";
  position: absolute;
  top: 100%;
  left: 50%;
  width: 50px;
  height: 24px;
  margin-left: -25px;
  background: #fff;
  clip-path: polygon(0 0, 100% 0, 50% 100%);
}

.popup p {
  margin: 0;
  font-size: 26px;
  line-height: 40px;
  color: #333;
  white-space: nowrap;
}

.popup button {
  position: absolute;
  top: 14px;
  right: 16px;
  padding: 0;
  border: 0;
  background: none;
}

.popup svg { display: block; width: 20px; height: 20px; }

.attribution {
  position: absolute;
  right: 0;
  bottom: 0;
  padding: 0 10px;
  font-size: 22px;
  line-height: 31px;
  color: #2874a6;
  background: rgba(255, 255, 255, .8);
}
```
